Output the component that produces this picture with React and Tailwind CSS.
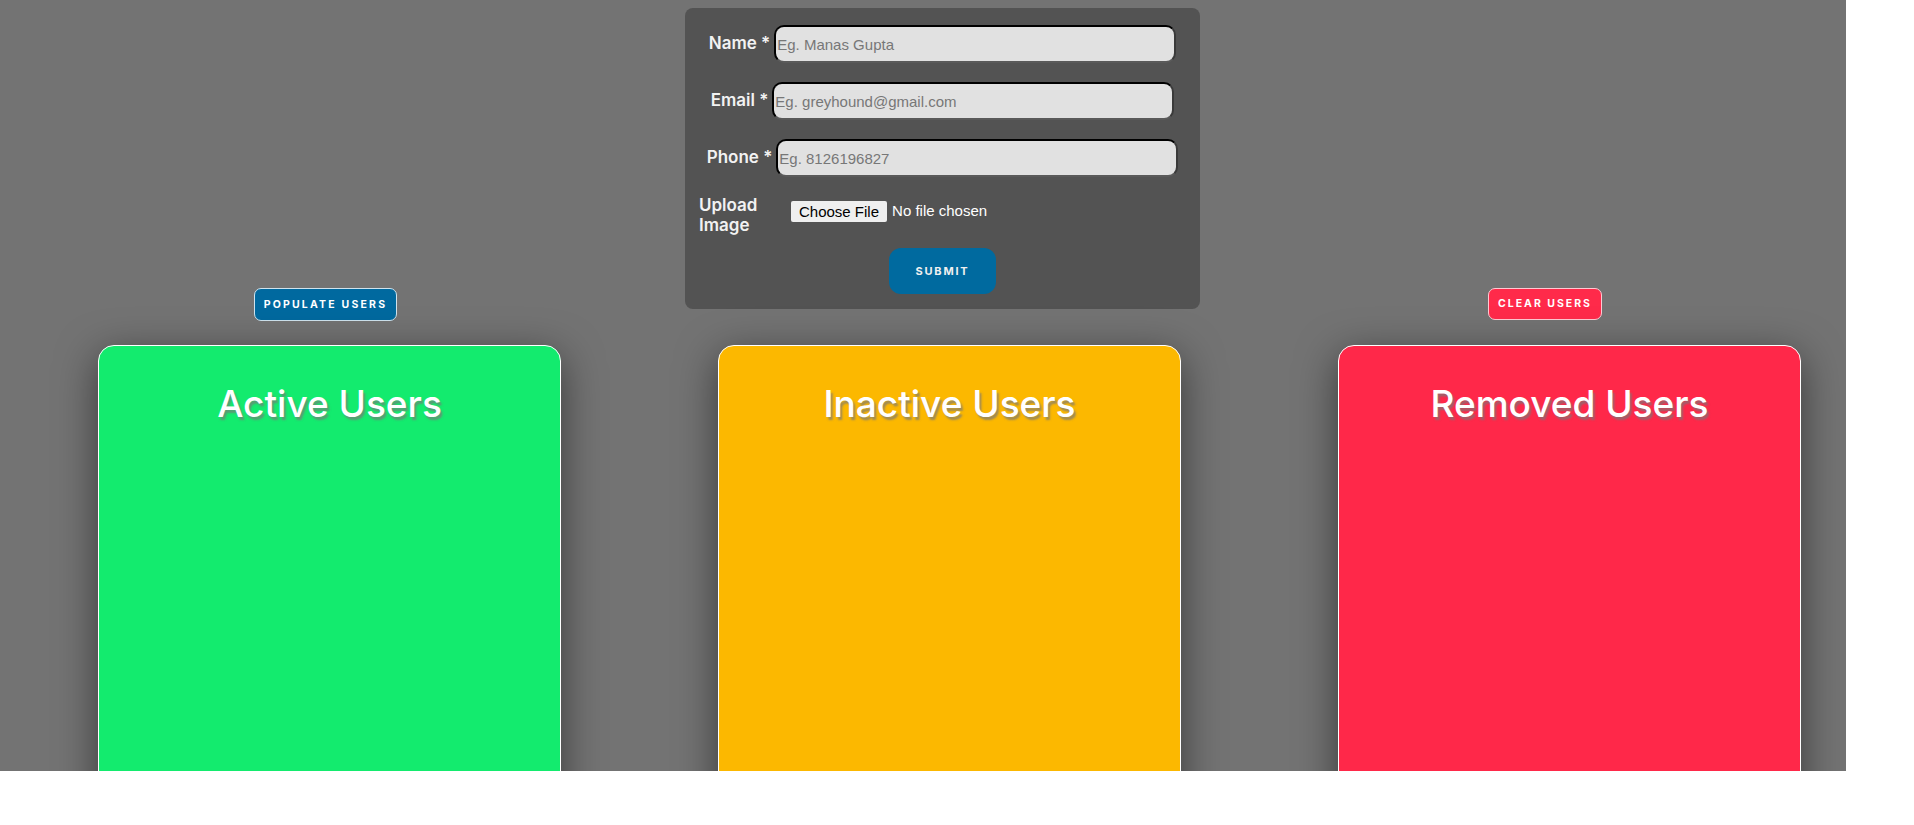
import React from "react";

const Field = ({ label, placeholder }) => (
  <div className="flex items-center justify-center gap-[4px]">
    <label className="text-[17px] font-semibold text-[#f2f2f2] whitespace-nowrap [font-family:Inter,sans-serif]">
      {label} *
    </label>
    <input
      type="text"
      placeholder={placeholder}
      className="w-[402px] h-[38px] rounded-[10px] bg-[#e1e1e1] border-2 border-t-black border-l-black border-b-[#5a5a5a] border-r-[#3a3a3a] px-[1px] text-[15px] text-[#333] placeholder:text-[#777] outline-none [font-family:'Liberation_Sans',Arial,sans-serif]"
    />
  </div>
);

const Card = ({ title, color }) => (
  <div
    className={`w-[463px] h-[520px] shrink-0 rounded-t-[16px] border border-white shadow-[0_10px_40px_rgba(0,0,0,0.5)] ${color}`}
  >
    <h2 className="pt-[30px] text-center text-[37px] font-medium text-white [text-shadow:2px_3px_2px_rgba(120,120,120,0.7)] [font-family:Inter,sans-serif]">
      {title}
    </h2>
  </div>
);

export default function App() {
  return (
    <div className="min-h-screen bg-white">
      <div className="w-[1846px] h-[771px] bg-[#737373] overflow-hidden">
        <div className="flex items-start">
          <div className="w-[651px] flex justify-center pt-[288px]">
            <button className="w-[143px] h-[33px] rounded-[7px] border border-[#cfe3ee] bg-[#00699f] text-[10.5px] font-bold tracking-[2.2px] text-white [font-family:Inter,sans-serif]">
              POPULATE USERS
            </button>
          </div>

          <div className="w-[583px] flex justify-center pt-[8px]">
            <form className="w-[515px] h-[301px] rounded-[8px] bg-[#535353] pt-[17px] flex flex-col">
              <div className="flex flex-col gap-[19px]">
                <Field label="Name" placeholder="Eg. Manas Gupta" />
                <Field label="Email" placeholder="Eg. greyhound@gmail.com" />
                <Field label="Phone" placeholder="Eg. 8126196827" />
              </div>
              <div className="flex items-start pl-[14px] mt-[18px]">
                <span className="w-[70px] text-[17px] leading-[20px] font-semibold text-[#f2f2f2] [font-family:Inter,sans-serif]">
                  Upload Image
                </span>
                <div className="ml-[22px] mt-[5px] flex items-center gap-[5px] text-[15px] [font-family:'Liberation_Sans',Arial,sans-serif]">
                  <span className="bg-[#efefef] text-black px-[8px] h-[21px] leading-[21px] rounded-[2px]">
                    Choose File
                  </span>
                  <span className="text-white">No file chosen</span>
                </div>
              </div>
              <div className="flex justify-center mt-[13px]">
                <button
                  type="button"
                  className="w-[107px] h-[46px] rounded-[12px] bg-[#006a9f] text-[11px] font-bold tracking-[1.8px] text-[#f0f0f0] [font-family:Inter,sans-serif]"
                >
                  SUBMIT
                </button>
              </div>
            </form>
          </div>

          <div className="pt-[288px] pl-[254px]">
            <button className="w-[114px] h-[32px] rounded-[7px] border border-[#ffc9d2] bg-[#ff2a4a] text-[10.5px] font-bold tracking-[2px] text-white [font-family:Inter,sans-serif]">
              CLEAR USERS
            </button>
          </div>
        </div>

        <div className="flex gap-[157px] pl-[98px] mt-[24px]">
          <Card title="Active Users" color="bg-[#13eb6e]" />
          <Card title="Inactive Users" color="bg-[#fcb800]" />
          <Card title="Removed Users" color="bg-[#ff2849]" />
        </div>
      </div>
    </div>
  );
}
